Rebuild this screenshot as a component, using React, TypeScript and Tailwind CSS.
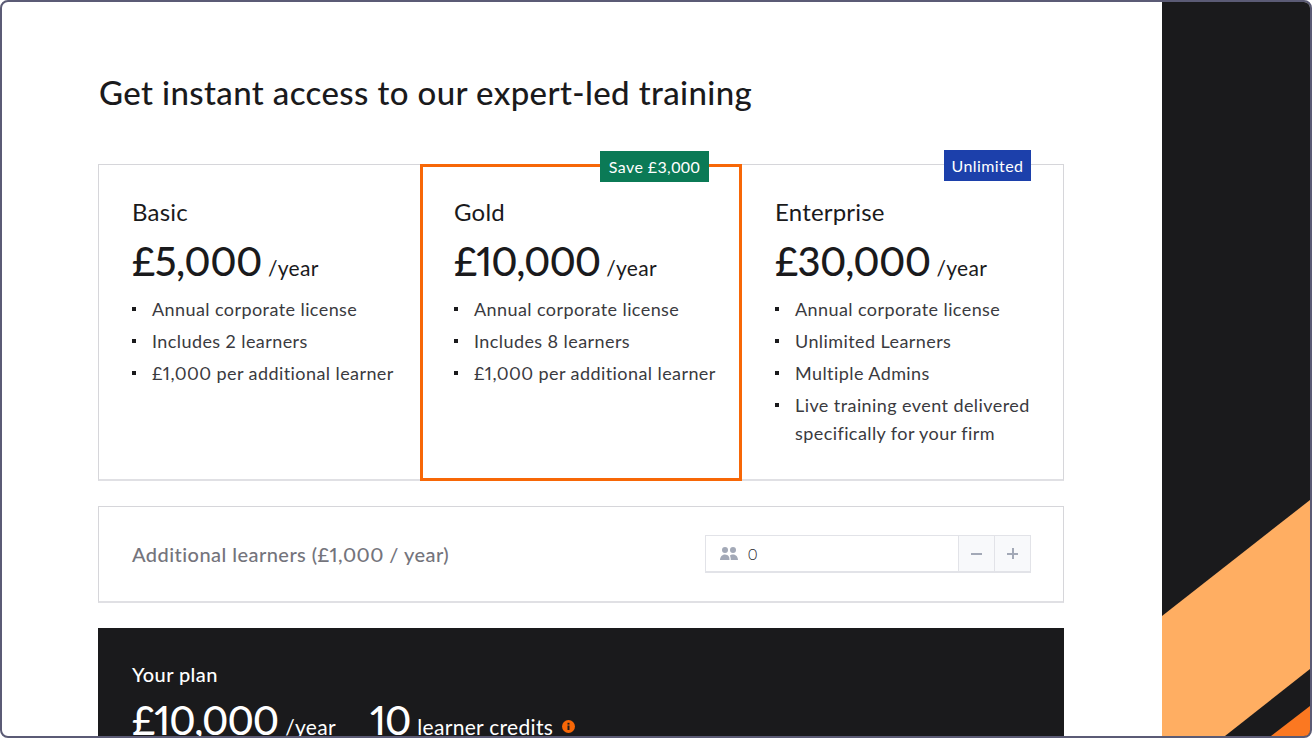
const plans = [
  {
    name: "Basic",
    price: "£5,000",
    box: "w-[321px] pt-[32px] pl-[33px]",
    priceBox: "tracking-[-0.5px]",
    features: ["Annual corporate license", "Includes 2 learners", "£1,000 per additional learner"],
  },
  {
    name: "Gold",
    price: "£10,000",
    badge: "Save £3,000",
    box: "z-10 w-[322px] -mt-px -mb-[2px] -mr-px border-[3px] border-[#f76707] pt-[30px] pl-[31px]",
    priceBox: "tracking-[-1px]",
    badgeBox: "top-[-16px] right-[30px] w-[109px] bg-[#0b7a56]",
    features: ["Annual corporate license", "Includes 8 learners", "£1,000 per additional learner"],
  },
  {
    name: "Enterprise",
    price: "£30,000",
    badge: "Unlimited",
    box: "w-[322px] pt-[32px] pl-[34px]",
    priceBox: "tracking-[-0.7px]",
    badgeBox: "top-[-15px] right-[32px] w-[87px] bg-[#1c40ab]",
    features: [
      "Annual corporate license",
      "Unlimited Learners",
      "Multiple Admins",
      "Live training event delivered specifically for your firm",
    ],
  },
];

function PlanCard({ plan }: { plan: (typeof plans)[number] }) {
  return (
    <div className={`relative shrink-0 pr-[20px] ${plan.box}`}>
      {plan.badge && (
        <span
          className={`absolute flex h-[31px] items-center justify-center text-[16px] tracking-[0.4px] text-white ${plan.badgeBox}`}
        >
          {plan.badge}
        </span>
      )}
      <h2 className="text-[24px] leading-[30px] tracking-[0.2px] text-[#1a1a1c]">{plan.name}</h2>
      <div className="mt-[5px] flex items-baseline gap-[6px] text-[#1a1a1c]">
        <span className={`text-[40px] leading-[58px] font-medium proportional-nums ${plan.priceBox}`}>{plan.price}</span>
        <span className="text-[21px] tracking-[0.3px]">/year</span>
      </div>
      <ul className="mt-[5px] flex flex-col gap-1">
        {plan.features.map((f) => (
          <li key={f} className="flex text-[18px] leading-[28px] tracking-[0.42px] text-[#3a3a40] proportional-nums">
            <span className="mt-[12px] mr-[16px] h-[4px] w-[4px] shrink-0 bg-[#1a1a1c]" />
            <span>{f}</span>
          </li>
        ))}
      </ul>
    </div>
  );
}

export default function App() {
  return (
    <div className="flex h-[738px] w-[1312px] overflow-hidden rounded-lg border-2 border-[#5b5b75] bg-white font-['Lato',sans-serif]">
      <main className="w-[1160px] shrink-0 pl-[97px]">
        <h1 className="mt-[69px] text-[33px] leading-[42px] font-medium tracking-[0.38px] text-[#1a1a1c]">
          Get instant access to our expert-led training
        </h1>
        <section className="mt-[51px] -ml-px flex h-[317px] w-[966px] border border-b-2 border-[#d6d6da] border-b-[#e0e0e4]">
          {plans.map((plan) => (
            <PlanCard key={plan.name} plan={plan} />
          ))}
        </section>
        <section className="mt-[25px] -ml-px flex h-[97px] w-[966px] items-center justify-between border border-b-2 border-[#d6d6da] border-b-[#e0e0e4] pr-[32px] pl-[33px]">
          <span className="text-[20px] font-medium tracking-[0.45px] text-[#74747c] proportional-nums">
            Additional learners (£1,000 / year)
          </span>
          <div className="flex h-[38px] w-[326px] border border-b-2 border-[#e2e3e8]">
            <div className="flex flex-1 items-center gap-[9px] pl-[13px] text-[16px] font-light text-[#2a2a2e]">
              <svg width="20" height="16" viewBox="0 0 20 16" fill="#a3a9b7">
                <circle cx="6" cy="4" r="3" />
                <circle cx="14" cy="4" r="3" />
                <path d="M1 14c0-3.200 2-5.600 5-5.600 1.600 0 2.900.7 3.700 1.800.5.8.8 2.100.8 3.800H1Z" />
                <path d="M11.800 14c0-2-.4-3.500-1-4.500.8-.7 2-1.100 3.200-1.100 3 0 5 2.400 5 5.600h-7.200Z" />
              </svg>
              <span>0</span>
            </div>
            <button className="flex w-[36px] items-center justify-center border-l border-[#e2e3e8] bg-[#f8f9fb]">
              <span className="h-[2px] w-[11px] bg-[#a3a9b7]" />
            </button>
            <button className="relative flex w-[36px] items-center justify-center border-l border-[#e2e3e8] bg-[#f8f9fb]">
              <span className="h-[2px] w-[11px] bg-[#a3a9b7]" />
              <span className="absolute h-[11px] w-[2px] bg-[#a3a9b7]" />
            </button>
          </div>
        </section>
        <section className="mt-[25px] -ml-px h-[200px] w-[966px] bg-[#1a1a1c] pt-[32px] pl-[34px] text-white">
          <div className="text-[20px] leading-[28px] font-medium tracking-[0.4px]">Your plan</div>
          <div className="mt-[3px] flex items-baseline">
            <span className="text-[40px] leading-[58px] font-medium tracking-[-1px] proportional-nums">£10,000</span>
            <span className="ml-[7px] text-[21px] tracking-[0.3px]">/year</span>
            <span className="ml-[34px] text-[40px] leading-[58px] font-medium tracking-[-1px] proportional-nums">10</span>
            <span className="ml-[7px] text-[21px] tracking-[0.3px]">learner credits</span>
            <svg className="mt-[29px] ml-[9px] self-start" width="13" height="13" viewBox="0 0 13 13">
              <circle cx="6.500" cy="6.500" r="6.500" fill="#f76707" />
              <rect x="5.500" y="5.500" width="2" height="4.500" fill="#1a1a1c" />
              <rect x="5.500" y="2.800" width="2" height="1.800" fill="#1a1a1c" />
            </svg>
          </div>
        </section>
      </main>
      <aside className="relative flex-1 bg-[#1a1a1c]">
        <svg className="absolute inset-0 h-full w-full" viewBox="0 0 148 734" preserveAspectRatio="none">
          <polygon points="0,614 148,498 148,667 63,734 0,734" fill="#ffae62" />
          <polygon points="109,734 148,704 148,734" fill="#fb7821" />
        </svg>
      </aside>
    </div>
  );
}
